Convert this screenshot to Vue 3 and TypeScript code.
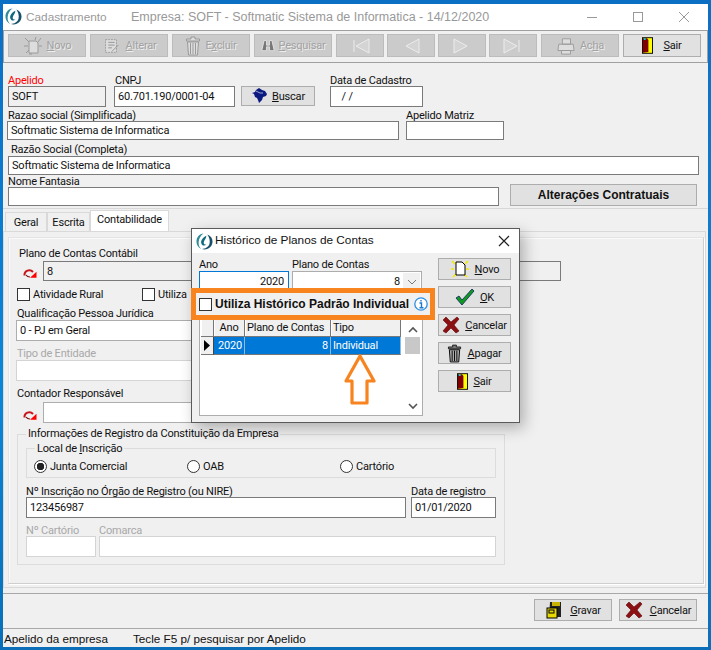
<script setup lang="ts">
const navButtons: string[] = ['M7 7v12M9 13l13-7v14z', 'M8 13l13-7v14z', 'M18 13L5 6v14z', 'M19 7v12M17 13L4 6v14z']
</script>

<template>
  <div class="desktop">
    <svg width="0" height="0" class="defs">
      <symbol id="logo" viewBox="0 0 18 18">
        <circle cx="9" cy="9" r="8.500" fill="#fff" />
        <path d="M8 .6C3.500 1 .5 4.500.5 9c0 3.500 2 6.500 5 8-2-2-3-4.500-2.700-7.500C3 6 5 2.500 8 .6z" fill="#2f8b97" />
        <path d="M12 1.500c3.500 1.500 5.500 4 5.500 7.500 0 4.500-3.500 8.500-8.500 8.500-1 0-2-.2-2.700-.5 3.500 0 7-2 8-5.500.8-3.500-.2-7-2.300-10z" fill="#17506a" />
        <path d="M11 3C8 4.500 5 7.500 5.500 10.500c.5 2.500 3 3.500 5.500 2-2.500 0-3.200-1.500-2.700-3 .5-2 2.500-3.500 2.700-6.500z" fill="#0f6a80" />
      </symbol>
      <symbol id="door" viewBox="0 0 12 18">
        <rect x=".5" y=".5" width="11" height="17" fill="#ffff00" stroke="#000" />
        <path d="M1 1h4.500L7 3v13l-6 1z" fill="#800000" />
        <rect x="2" y="1" width="2" height="2" fill="#00d0e0" />
      </symbol>
      <symbol id="cross" viewBox="0 0 18 18">
        <path d="M1 4l3-3 5 5 6-5 2 2-5 6 5 6-3 2-5-5-5 5-3-2 5-6z" fill="#8c0f12" stroke="#5a0708" stroke-width=".6" />
      </symbol>
      <symbol id="trash" viewBox="0 0 16 20">
        <path d="M6 1h4v2h4.500v2h-13V3H6z" fill="#777" stroke="#000" stroke-width=".8" />
        <path d="M2.500 6h11l-1 13h-9z" fill="#aaa" stroke="#000" />
        <path d="M5.500 7v11M8 7v11M10.500 7v11" stroke="#000" />
      </symbol>
      <symbol id="redArrow" viewBox="0 0 14 9">
        <path d="M1.500 6.500C1 1.500 7-.5 10 3" fill="none" stroke="#c8141c" stroke-width="2" />
        <path d="M3 6c1 1.500 2.500 2 4 2" fill="none" stroke="#7a1015" stroke-width="1.200" />
        <path d="M7 8.800l6.500-6V8.800z" fill="#f00" />
      </symbol>
    </svg>

    <div class="window">
      <header class="titlebar">
        <svg class="logo" width="17" height="17"><use href="#logo" /></svg>
        <span class="title-app">Cadastramento</span>
        <span class="title-doc">Empresa: SOFT - Softmatic Sistema de Informatica - 14/12/2020</span>
        <div class="controls">
          <svg width="46" height="26"><path d="M18 13.500h10" stroke="#999" /></svg>
          <svg width="46" height="26"><rect x="18.500" y="8.500" width="9" height="9" fill="none" stroke="#999" /></svg>
          <svg width="46" height="26"><path d="M18 8l10 10M28 8L18 18" stroke="#999" /></svg>
        </div>
      </header>

      <div class="toolbar">
        <button class="btn off tool"><svg width="20" height="20" viewBox="0 0 20 20"><path d="M6 5h7l2 2v10H6z" fill="#ddd" stroke="#9a9a9a" /><path d="M2 2l4 4M13 1l-1 3M18 2l-3 4M1 10h4M16 10h3M3 17l3-3M6 18h3" stroke="#9a9a9a" /></svg><span><u>N</u>ovo</span></button>
        <button class="btn off tool"><svg width="20" height="20" viewBox="0 0 22 20"><path d="M5 3h12v14H5z" fill="#ddd" stroke="#9a9a9a" stroke-dasharray="2 1" /><path d="M8 6h7M8 9h7M8 12h4M12 16l7-7" stroke="#8f8f8f" /></svg><span><u>A</u>lterar</span></button>
        <button class="btn off tool"><svg width="16" height="20" viewBox="0 0 16 20"><path d="M6 1h4v2h4.500v2h-13V3H6z" fill="#ddd" stroke="#999" /><path d="M2.500 6h11l-1 13h-9z" fill="#ddd" stroke="#999" /><path d="M5.500 7v11M8 7v11M10.500 7v11" stroke="#999" /></svg><span>E<u>x</u>cluir</span></button>
        <button class="btn off tool"><svg width="14" height="14" viewBox="0 0 18 18"><path d="M4 2h3v6h4V2h3l3 13h-6V10H7v5H1z" fill="#777" stroke="#eee" /></svg><span><u>P</u>esquisar</span></button>
        <button v-for="d in navButtons" :key="d" class="btn off nav">
          <svg width="26" height="26" viewBox="0 0 26 26"><path :d="d" fill="#d4d4d4" stroke="#ececec" stroke-width="1" /></svg>
        </button>
        <button class="btn off tool acha"><svg width="20" height="18" viewBox="0 0 22 20"><path d="M7 2h9v6H7zM3 8h16l1 7H2zM6 15h10v4H6z" fill="#ddd" stroke="#999" /></svg><span>Ac<u>h</u>a</span></button>
        <button class="btn tool sair"><svg width="11" height="17"><use href="#door" /></svg><span><u>S</u>air</span></button>
      </div>

      <section class="head">
        <div class="row row1">
          <div class="field w98"><label class="req">Apelido</label><div class="inp dis h21">SOFT</div></div>
          <div class="field w121 ml8"><label class="lp1">CNPJ</label><div class="inp h21">60.701.190/0001-04</div></div>
          <button class="btn buscar">
            <svg width="17" height="16" viewBox="0 0 17 16"><path d="M1 5l3-1 1-2 3-2 3 2 3 1 2 3-1 2-3 1-1 3-3 3-1-3-1-2-2-1-1-3z" fill="#0a1a80" /><path d="M5 3l4 2 3 0" fill="none" stroke="#dfe4f5" stroke-width=".7" /></svg>
            <span><u>B</u>uscar</span>
          </button>
          <div class="field w93 ml15"><label>Data de Cadastro</label><div class="inp h21 date"> / /</div></div>
        </div>
        <div class="row row2">
          <div class="field w392"><label class="lp1">Razao social (Simplificada)</label><div class="inp h19">Softmatic Sistema de Informatica</div></div>
          <div class="field w98 ml7"><label>Apelido Matriz</label><div class="inp h19"></div></div>
        </div>
        <div class="row row3">
          <div class="field w691"><label class="lp3">Razão Social (Completa)</label><div class="inp h19">Softmatic Sistema de Informatica</div></div>
        </div>
        <div class="row row4">
          <div class="field w491"><label>Nome Fantasia</label><div class="inp h19"></div></div>
          <button class="btn contract">Alterações Contratuais</button>
        </div>
      </section>

      <div class="tabs">
        <div class="tab t1">Geral</div>
        <div class="tab t2">Escrita</div>
        <div class="tab active">Contabilidade</div>
      </div>

      <section class="panel">
        <div class="inner">
          <label class="lab-plano">Plano de Contas Contábil</label>
          <div class="lookup">
            <svg class="arrow" width="14" height="9"><use href="#redArrow" /></svg>
            <div class="inp dis h20 w518">8</div>
          </div>
          <div class="checks">
            <span class="check"><i class="box"></i>Atividade Rural</span>
            <span class="check c2"><i class="box"></i>Utiliza</span>
          </div>
          <label class="lab-q">Qualificação Pessoa Jurídica</label>
          <div class="inp soft h21 w484">0 - PJ em Geral</div>
          <label class="lab-q off-text t-ent">Tipo de Entidade</label>
          <div class="inp light h21 w484"></div>
          <label class="lab-q t-cont">Contador Responsável</label>
          <div class="lookup l2">
            <svg class="arrow" width="14" height="9"><use href="#redArrow" /></svg>
            <div class="inp soft h21 w457"></div>
          </div>

          <fieldset class="group outer-group">
            <legend>Informações de Registro da Constituição da Empresa</legend>
            <fieldset class="group local">
              <legend>Local de <u>I</u>nscrição</legend>
              <div class="radios">
                <span class="radio"><i class="dot on"></i>Junta Comercial</span>
                <span class="radio"><i class="dot"></i>OAB</span>
                <span class="radio"><i class="dot"></i>Cartório</span>
              </div>
            </fieldset>
            <div class="row reg">
              <div class="field w380"><label>Nº Inscrição no Órgão de Registro (ou NIRE)</label><div class="inp h21">123456987</div></div>
              <div class="field w85 ml5"><label>Data de registro</label><div class="inp h21">01/01/2020</div></div>
            </div>
            <div class="row cart">
              <div class="field w70"><label class="off-text">Nº Cartório</label><div class="inp light h21"></div></div>
              <div class="field w397 ml3"><label class="off-text">Comarca</label><div class="inp light h21"></div></div>
            </div>
          </fieldset>
        </div>
      </section>

      <div class="actions">
        <button class="btn act"><svg width="18" height="18" viewBox="0 0 18 18"><path d="M5 1h11v15H4z" fill="#222" /><path d="M7 1h8v4H7z" fill="#c8b400" /><rect x="2" y="7" width="10" height="10" fill="#e6d800" stroke="#000" /><rect x="4" y="9" width="5" height="3" fill="none" stroke="#000" /></svg><span><u>G</u>ravar</span></button>
        <button class="btn act"><svg width="18" height="18"><use href="#cross" /></svg><span><u>C</u>ancelar</span></button>
      </div>

      <footer class="status">
        <span class="st1">Apelido da empresa</span>
        <span>Tecle F5 p/ pesquisar por Apelido</span>
      </footer>
    </div>

    <div class="dialog">
      <header class="dlg-title">
        <svg width="17" height="17"><use href="#logo" /></svg>
        <span class="dlg-name">Histórico de Planos de Contas</span>
        <svg class="dlg-x" width="12" height="12"><path d="M1 1l10 10M11 1L1 11" stroke="#222" stroke-width="1.200" /></svg>
      </header>
      <div class="dlg-body">
        <div class="dlg-left">
          <div class="row">
            <div class="field w90"><label>Ano</label><div class="inp focus h21 right">2020</div></div>
            <div class="field w130 ml3"><label>Plano de Contas</label>
              <div class="inp soft h21 combo"><span>8</span><i class="drop"><svg width="10" height="6"><path d="M1 1l4 4 4-4" fill="none" stroke="#777" /></svg></i></div>
            </div>
          </div>
          <div class="grid-wrap">
            <div class="grid-head">
              <div class="cell ind"></div>
              <div class="cell ano">Ano</div>
              <div class="cell plano">Plano de Contas</div>
              <div class="cell tipo">Tipo</div>
            </div>
            <div class="grid-row">
              <div class="cell ind"><svg width="6" height="11"><path d="M0 0l6 5.500L0 11z" fill="#000" /></svg></div>
              <div class="cell ano r">2020</div>
              <div class="cell plano r">8</div>
              <div class="cell tipo">Individual</div>
            </div>
            <div class="scroll">
              <svg class="up" width="10" height="7"><path d="M1 6l4-4 4 4" fill="none" stroke="#555" stroke-width="1.600" /></svg>
              <i class="thumb"></i>
              <svg class="down" width="10" height="7"><path d="M1 1l4 4 4-4" fill="none" stroke="#555" stroke-width="1.600" /></svg>
            </div>
          </div>
        </div>
        <div class="dlg-buttons">
          <button class="btn dlg"><svg width="20" height="20" viewBox="0 0 20 20"><path d="M2 2l3 3M18 2l-3 3M1 10h3M16 10h3M3 18l3-3M17 18l-3-3" stroke="#f4e800" stroke-width="1.500" /><path d="M6 3h6l3 3v10H6z" fill="#fff" stroke="#000" /></svg><span><u>N</u>ovo</span></button>
          <button class="btn dlg"><svg width="20" height="18" viewBox="0 0 20 18"><path d="M1 10l3-2 3 4L17 1l2 2L7 17z" fill="#0f9b1f" stroke="#0b2060" stroke-width=".8" /></svg><span><u>O</u>K</span></button>
          <button class="btn dlg"><svg width="18" height="18"><use href="#cross" /></svg><span><u>C</u>ancelar</span></button>
          <button class="btn dlg"><svg width="15" height="19"><use href="#trash" /></svg><span><u>A</u>pagar</span></button>
          <button class="btn dlg"><svg width="11" height="17"><use href="#door" /></svg><span><u>S</u>air</span></button>
        </div>
      </div>

      <div class="callout">
        <i class="box"></i>
        <strong>Utiliza Histórico Padrão Individual</strong>
        <svg width="14" height="14" viewBox="0 0 14 14"><circle cx="7" cy="7" r="6.200" fill="#fff" stroke="#2b8fe0" stroke-width="1.300" /><path d="M7 3v1.600M5.500 6H7.500v4.500M5.500 10.800h4" stroke="#1a78d0" stroke-width="1.400" fill="none" /></svg>
      </div>

      <svg class="up-arrow" width="32" height="52" viewBox="0 0 32 52">
        <path d="M16 2L30 27H23V49H8V27H2z" fill="#fff" stroke="#f7841f" stroke-width="3.200" stroke-linejoin="round" />
      </svg>
    </div>
  </div>
</template>

<style>
html, body { margin: 0; padding: 0; background: #0a78cf; }
</style>

<style scoped>
.desktop {
  position: relative;
  width: 711px;
  height: 650px;
  box-sizing: border-box;
  padding: 4px 3px 3px;
  overflow: hidden;
  background: linear-gradient(180deg, #0b6fc4 0%, #0a86d8 60%, #0a6fb8 100%);
  font-family: Roboto, "Liberation Sans", sans-serif;
  font-size: 11px;
  letter-spacing: -.2px;
  color: #111;
}
.defs { position: absolute; }
.window {
  width: 705px;
  height: 643px;
  background: #f0f0f0;
  display: flex;
  flex-direction: column;
}
.titlebar {
  flex: 0 0 26px;
  background: #fff;
  display: flex;
  align-items: center;
  padding-left: 2px;
  color: #999;
  font-family: "Liberation Sans", sans-serif;
  letter-spacing: 0;
}
.logo { flex: none; margin-top: -2px; }
.title-app { margin-left: 4px; width: 105px; font-size: 11.800px; }
.title-doc { font-size: 12.500px; }
.controls { margin-left: auto; display: flex; margin-right: 1px; }

.toolbar {
  flex: 0 0 33px;
  box-sizing: border-box;
  border: 1px solid #a0a0a0;
  display: flex;
  gap: 4px;
  padding: 3px 0 0 4px;
  background: #f0f0f0;
}
.btn {
  box-sizing: border-box;
  background: #e1e1e1;
  border: 1px solid #adadad;
  border-radius: 0;
  padding: 0;
  font: inherit;
  letter-spacing: inherit;
  color: #111;
  display: flex;
  align-items: center;
  justify-content: center;
  gap: 4px;
}
.btn.off { background: #cbcbcb; border-color: #bcbcbc; color: #a2a2a2; text-shadow: 1px 1px 0 #eee; }
.tool { width: 78px; height: 23px; }
.nav { width: 48px; height: 23px; }
.nav + .nav { margin-left: -1px; }
.sair { gap: 10px; }
.head { flex: 0 0 146px; display: flex; flex-direction: column; border-bottom: 1px solid #d8d8d8; box-sizing: border-box; }
.row { display: flex; align-items: flex-end; }
.row1 { padding: 10px 0 0 5px; }
.row2 { padding: 1px 0 0 4px; }
.row3 { padding: 3px 0 0 5px; }
.row4 { padding: 0 0 0 5px; margin-top: -1px; }
.field { display: flex; flex-direction: column; }
.field label, .lab-plano, .lab-q { height: 13px; line-height: 14px; white-space: nowrap; display: block; }
.row1 label { line-height: 15px; }
.row2 label, .row4 label, .reg label, .cart label { line-height: 16px; }
.req { color: #f00; }
.lp1 { padding-left: 1px; }
.lp3 { padding-left: 3px; }
.inp {
  box-sizing: border-box;
  border: 1px solid #7a7a7a;
  background: #fff;
  padding-left: 3px;
  display: flex;
  align-items: center;
  white-space: pre;
}
.inp.dis { background: #f0f0f0; }
.inp.soft { border-color: #adadad; }
.inp.light { border-color: #d4d4d4; }
.inp.focus { border-color: #0078d7; }
.right { justify-content: flex-end; padding-right: 4px; }
.h19 { height: 19px; }
.h20 { height: 20px; }
.h21 { height: 21px; }
.w70 { width: 70px; } .w85 { width: 85px; } .w90 { width: 90px; } .w93 { width: 93px; } .w98 { width: 98px; }
.w121 { width: 121px; } .w130 { width: 130px; } .w380 { width: 380px; } .w392 { width: 392px; } .w397 { width: 397px; }
.w457 { width: 457px; } .w484 { width: 484px; } .w491 { width: 491px; } .w518 { width: 518px; } .w691 { width: 691px; }
.ml3 { margin-left: 3px; } .ml5 { margin-left: 5px; } .ml7 { margin-left: 7px; } .ml8 { margin-left: 8px; } .ml15 { margin-left: 15px; }
.date { padding-left: 8px; }
.buscar { width: 74px; height: 20px; margin: 0 0 1px 6px; }
.contract { width: 187px; height: 22px; margin-left: 11px; font-weight: 700; font-family: "Liberation Sans", sans-serif; font-size: 12px; letter-spacing: 0; }

.tabs { flex: 0 0 22px; display: flex; align-items: flex-end; padding-left: 2px; box-sizing: border-box; }
.tab {
  box-sizing: border-box;
  height: 19px;
  border: 1px solid #d9d9d9;
  border-bottom: 0;
  display: flex;
  align-items: center;
  justify-content: center;
}
.t1 { width: 42px; }
.t2 { width: 43px; }
.tab.active { width: 79px; height: 21px; background: #fff; padding-bottom: 3px; }

.panel {
  flex: 0 0 357px;
  box-sizing: border-box;
  margin-right: 2px;
  border: 1px solid #d9d9d9;
  padding: 5px 1px 3px 4px;
}
.inner {
  height: 100%;
  box-sizing: border-box;
  border: 1px solid #cfcfcf;
  border-top-color: #e4e4e4;
  border-left-color: #e4e4e4;
  box-shadow: 1px 1px 0 #fff, inset 1px 1px 0 #fafafa;
  padding: 9px 0 0 7px;
}
.lab-plano { margin-left: 3px; }
.lookup { display: flex; align-items: center; margin-top: 1px; }
.arrow { margin: 5px 6px 0 7px; flex: none; }
.checks { display: flex; margin: 7px 0 0 1px; height: 13px; }
.check { display: flex; align-items: center; white-space: nowrap; width: 125px; }
.box { flex: none; width: 13px; height: 13px; box-sizing: border-box; border: 1px solid #333; background: #fff; margin-right: 3px; display: block; }
.lab-q { margin-top: 6px; padding-left: 1px; }
.t-ent { margin-top: 6px; }
.t-cont { margin-top: 7px; line-height: 12px !important; }
.off-text { color: #a8a8a8; }
.l2 { margin-top: 1px; }

.group { margin: 0; padding: 0; border: 1px solid #dcdcdc; }
.group legend { margin-left: 0; padding: 0 2px; line-height: 11px; height: 13px; }
.outer-group { box-sizing: border-box; width: 488px; height: 137px; margin: 5px 0 0 1px; padding: 1px 8px 0 8px; }
.local { box-sizing: border-box; height: 36px; }
.local legend { margin-left: 8px; line-height: 13px; }
.radios { display: grid; grid-template-columns: 153px 153px 1fr; padding: 5px 0 0 7px; }
.radio { display: flex; align-items: center; gap: 3px; }
.dot { width: 13px; height: 13px; box-sizing: border-box; border: 1px solid #333; border-radius: 50%; background: #fff; display: block; }
.dot.on { background: radial-gradient(circle, #222 0 3.500px, #fff 4px); }
.reg { margin-top: 6px; }
.cart { margin-top: 5px; }

.actions {
  flex: 0 0 36px;
  box-sizing: border-box;
  margin-top: 5px;
  border: 1px solid #a8a8a8;
  border-width: 1px 0;
  display: flex;
  justify-content: flex-end;
  gap: 7px;
  padding: 5px 11px 0 0;
}
.act { width: 78px; height: 22px; gap: 7px; }
.status { flex: 1; display: flex; align-items: center; padding-left: 1px; font-family: "Liberation Sans", sans-serif; font-size: 11.700px; letter-spacing: 0; }
.st1 { width: 129px; }

.dialog {
  position: absolute;
  left: 191px;
  top: 228px;
  width: 329px;
  height: 195px;
  box-sizing: border-box;
  border: 1px solid #5a5a5a;
  background: #f0f0f0;
  box-shadow: 4px 5px 14px rgba(0, 0, 0, .28);
}
.dlg-title { height: 24px; background: #fff; display: flex; align-items: center; padding-left: 4px; gap: 2px; font-size: 11.800px; font-family: "Liberation Sans", sans-serif; letter-spacing: 0; }
.dlg-name { margin-top: -2px; }
.dlg-x { margin-left: auto; margin-right: 9px; }
.dlg-body { display: flex; padding: 5px 0 0 7px; }
.dlg-left { width: 224px; }
.combo { justify-content: flex-end; padding-right: 1px; }
.combo span { margin-right: 3px; }
.drop { width: 17px; height: 17px; background: #f0f0f0; display: flex; align-items: center; justify-content: center; }
.grid-wrap { position: relative; box-sizing: border-box; height: 124px; width: 224px; border: 1px solid #adadad; background: #fff; padding: 26px 0 0 1px; }
.grid-head, .grid-row { display: flex; width: 200px; }
.grid-head { height: 18px; }
.grid-row { height: 18px; }
.cell { box-sizing: border-box; display: flex; align-items: center; padding: 0 2px; white-space: nowrap; }
.grid-head .cell { background: #f0f0f0; border-right: 1px solid #777; border-bottom: 1px solid #777; box-shadow: inset 1px 1px 0 #fff; }
.ind { width: 13px; }
.ano { width: 31px; justify-content: center; }
.plano { width: 86px; }
.tipo { width: 70px; }
.grid-row .cell { background: #0078d7; color: #fff; border-right: 1px solid #8fb9dd; border-bottom: 1px solid #777; }
.grid-row .ind { background: #f0f0f0; justify-content: center; color: #000; border-right: 1px solid #444; }
.r { justify-content: flex-end; }
.scroll { position: absolute; left: 205px; top: 0; bottom: 0; width: 15px; background: #fff; display: flex; flex-direction: column; align-items: center; }
.up { margin-top: 33px; }
.thumb { display: block; width: 15px; height: 17px; background: #c8c8c8; margin-top: 4px; }
.down { margin-top: auto; margin-bottom: 5px; }
.dlg-buttons { display: flex; flex-direction: column; gap: 6px; margin-left: 15px; }
.dlg { width: 73px; height: 22px; gap: 5px; }
.callout {
  position: absolute;
  left: -1px;
  top: 59px;
  width: 244px;
  height: 32px;
  box-sizing: border-box;
  border: 5px solid #f7841f;
  background: #f0f0f0;
  display: flex;
  align-items: center;
  padding-left: 3px;
}
.callout .box { margin-right: 3px; }
.callout strong { white-space: nowrap; font: 700 12px "Liberation Sans", sans-serif; letter-spacing: 0; margin-right: 5px; }
.up-arrow { position: absolute; left: 152px; top: 125px; }
</style>
